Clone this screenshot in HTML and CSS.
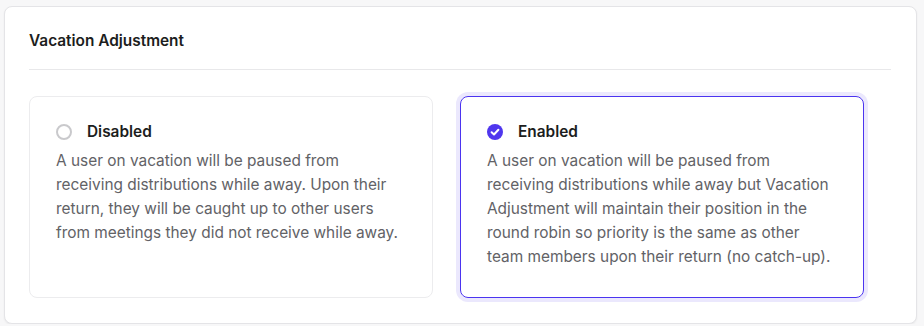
FILE: index.html
```html
<!DOCTYPE html>
<html lang="en">
<head>
    <meta charset="UTF-8">
    <title>Vacation Adjustment</title>
    <link rel="stylesheet" href="styles.css">
</head>
<body>
<div class="panel">
    <div class="panel-header">Vacation Adjustment</div>
    <div class="options">
        <!-- disabled option -->
        <div class="option">
            <div class="option-title">
                <svg class="radio" width="16" height="16" viewBox="0 0 16 16">
                    <circle cx="8" cy="8" r="7" fill="none" stroke="#c9c9cc" stroke-width="2"/>
                </svg>
                <span>Disabled</span>
            </div>
            <p class="option-text">A user on vacation will be paused from receiving distributions while away. Upon their return, they will be caught up to other users from meetings they did not receive while away.</p>
        </div>
        <!-- enabled option (selected) -->
        <div class="option selected">
            <div class="option-title">
                <svg class="radio" width="16" height="16" viewBox="0 0 16 16">
                    <circle cx="8" cy="8" r="8" fill="#4f36ee"/>
                    <path d="M4.6 8.3 L7 10.5 L11.4 5.8" fill="none" stroke="#fff" stroke-width="2" stroke-linecap="round" stroke-linejoin="round"/>
                </svg>
                <span>Enabled</span>
            </div>
            <p class="option-text">A user on vacation will be paused from receiving distributions while away but Vacation Adjustment will maintain their position in the round robin so priority is the same as other team members upon their return (no catch-up).</p>
        </div>
    </div>
</div>
</body>
</html>
```

FILE: styles.css
```css
body {
    margin: 0;
    padding: 6px 0 0 4px;
    background: #f7f7f8;
    font-family: Inter, 'Noto Sans', sans-serif;
}

.panel {
    width: 913px;
    background: #fff;
    border: 1px solid #e4e4e7;
    border-radius: 8px;
    box-shadow: 0 1px 2px rgba(0, 0, 0, 0.06);
    padding: 0 25px 25px 24px;
    box-sizing: border-box;
}

.panel-header {
    padding: 23px 0 17px;
    line-height: 22px;
    font-size: 15.4px;
    font-weight: 600;
    color: #1c1d20;
    border-bottom: 1px solid #e8e8ea;
}

.options {
    display: grid;
    grid-template-columns: 404px 404px;
    gap: 27px;
    margin-top: 26px;
}

.option {
    border: 1px solid #ececee;
    border-radius: 8px;
    padding: 24px 26px 28px;
}

.option.selected {
    border-color: #4b34f0;
    box-shadow: 0 0 0 4px #ebe8fd;
}

.option-title {
    display: flex;
    align-items: center;
    gap: 15px;
    line-height: 22px;
    font-size: 15.4px;
    font-weight: 600;
    color: #1c1d20;
}

.radio {
    flex: none;
}

.option-text {
    margin: 6px 0 0;
    font-size: 15.4px;
    line-height: 24px;
    color: #626266;
}
```
